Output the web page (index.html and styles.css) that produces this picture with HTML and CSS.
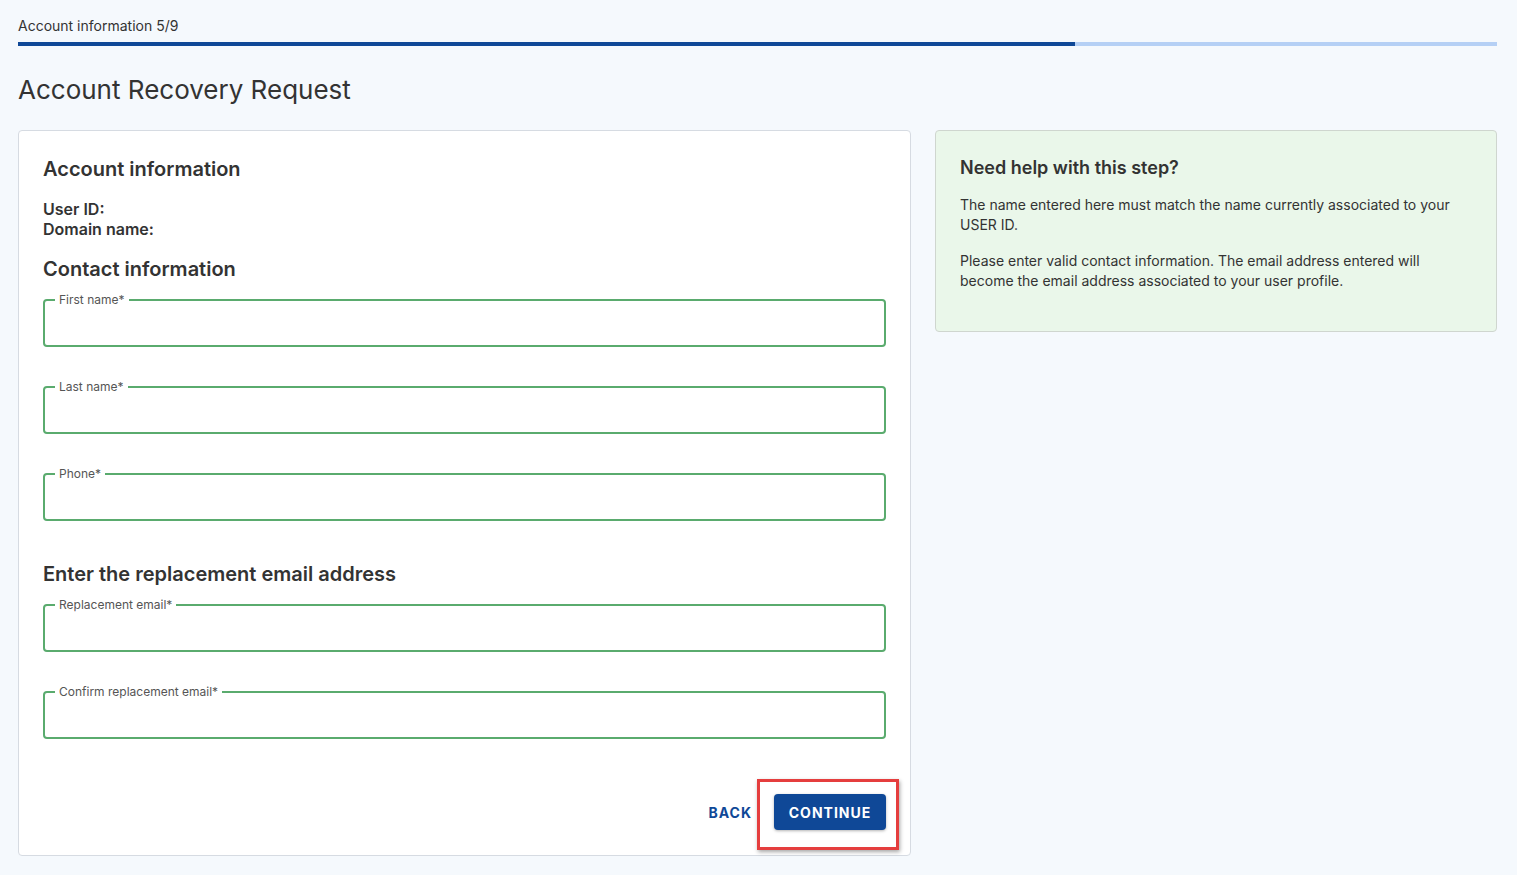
FILE: index.html
```html
<!DOCTYPE html>
<html lang="en">
<head>
    <meta charset="UTF-8">
    <title>Account Recovery Request</title>
    <link rel="stylesheet" href="styles.css">
</head>
<body>

<div class="page">
    <div class="step">
        <div class="step-label">Account information 5/9</div>
        <div class="progress"><div class="progress-bar" style="width: 71.5%"></div></div>
    </div>

    <h1 class="title">Account Recovery Request</h1>

    <div class="columns">
        <form class="card">
            <h2 class="section-title">Account information</h2>
            <div class="info-line">User ID:</div>
            <div class="info-line">Domain name:</div>

            <h2 class="section-title contact">Contact information</h2>
            <fieldset class="field">
                <legend>First name*</legend>
                <input type="text">
            </fieldset>
            <fieldset class="field">
                <legend>Last name*</legend>
                <input type="text">
            </fieldset>
            <fieldset class="field">
                <legend>Phone*</legend>
                <input type="text">
            </fieldset>

            <h2 class="section-title email">Enter the replacement email address</h2>
            <fieldset class="field">
                <legend>Replacement email*</legend>
                <input type="email">
            </fieldset>
            <fieldset class="field">
                <legend>Confirm replacement email*</legend>
                <input type="email">
            </fieldset>

            <div class="actions">
                <a class="btn-back">BACK</a>
                <span class="highlight">
                    <button type="button" class="btn-continue">CONTINUE</button>
                </span>
            </div>
        </form>

        <div class="help">
            <h3 class="help-title">Need help with this step?</h3>
            <p>The name entered here must match the name currently associated to your USER ID.</p>
            <p>Please enter valid contact information. The email address entered will become the email address associated to your user profile.</p>
        </div>
    </div>
</div>

</body>
</html>
```

FILE: styles.css
```css
body {
    margin: 0;
    background: #f5f9fd;
    font-family: Inter, "Noto Sans", sans-serif;
    color: #333;
}

.page {
    padding: 16px 20px 20px 18px;
}

.step-label {
    font-size: 14px;
    line-height: 20px;
    color: #333;
}

.progress {
    margin-top: 6px;
    height: 4px;
    background: #b5d0f5;
}

.progress-bar {
    height: 100%;
    background: #0f4897;
}

.title {
    margin: 27px 0 23px;
    font-size: 26px;
    font-weight: 400;
    line-height: 34px;
    color: #333;
}

.columns {
    display: flex;
    align-items: flex-start;
    gap: 24px;
}

.card {
    flex: 0 0 893px;
    box-sizing: border-box;
    background: #fff;
    border: 1px solid #d6dbe2;
    border-radius: 4px;
    padding: 24px 24px 25px 24px;
}

.section-title {
    margin: 0;
    font-size: 20px;
    font-weight: 600;
    line-height: 28px;
    color: #333;
}

.section-title.contact {
    margin-top: 16px;
    margin-bottom: 10px;
}

.section-title.email {
    margin-top: 39px;
    margin-bottom: 10px;
}

.info-line {
    font-size: 16px;
    font-weight: 600;
    line-height: 20px;
}

.section-title + .info-line {
    margin-top: 16px;
}

.field {
    margin: 0 0 33px;
    padding: 0 12px;
    border: 2px solid #5aab6e;
    border-radius: 4px;
}

.field legend {
    margin-left: -2px;
    padding: 0 4px;
    font-size: 12px;
    line-height: 14px;
    color: #555;
}

.field input {
    display: block;
    width: 100%;
    height: 38px;
    border: 0;
    outline: none;
    padding: 0;
    background: transparent;
    font-family: inherit;
    font-size: 14px;
}

.actions {
    display: flex;
    justify-content: flex-end;
    align-items: center;
    gap: 22px;
    margin-top: 55px;
}

.btn-back {
    font-size: 14px;
    font-weight: 700;
    letter-spacing: 1px;
    color: #0f4897;
    cursor: pointer;
}

.highlight {
    position: relative;
    display: inline-block;
}

.highlight::after {
    content: "";
    position: absolute;
    left: -17px;
    right: -13px;
    top: -15px;
    bottom: -20px;
    border: 3px solid #e53e3e;
    box-shadow: 1px 2px 4px rgba(0, 0, 0, 0.35);
    pointer-events: none;
}

.btn-continue {
    display: block;
    width: 112px;
    height: 36px;
    border: 0;
    border-radius: 4px;
    background: #0f4897;
    color: #fff;
    font-family: inherit;
    font-size: 14px;
    font-weight: 700;
    letter-spacing: 1px;
    box-shadow: 0 1px 3px rgba(0, 0, 0, 0.3);
    cursor: pointer;
}

.help {
    flex: 1;
    box-sizing: border-box;
    min-height: 202px;
    background: #eaf7ea;
    border: 1px solid #cfd6cf;
    border-radius: 4px;
    padding: 25px 24px 20px;
}

.help-title {
    margin: 0 0 15px;
    font-size: 18px;
    font-weight: 600;
    line-height: 24px;
    color: #333;
}

.help p {
    margin: 0 0 16px;
    font-size: 14px;
    line-height: 20px;
    color: #333;
}
```
